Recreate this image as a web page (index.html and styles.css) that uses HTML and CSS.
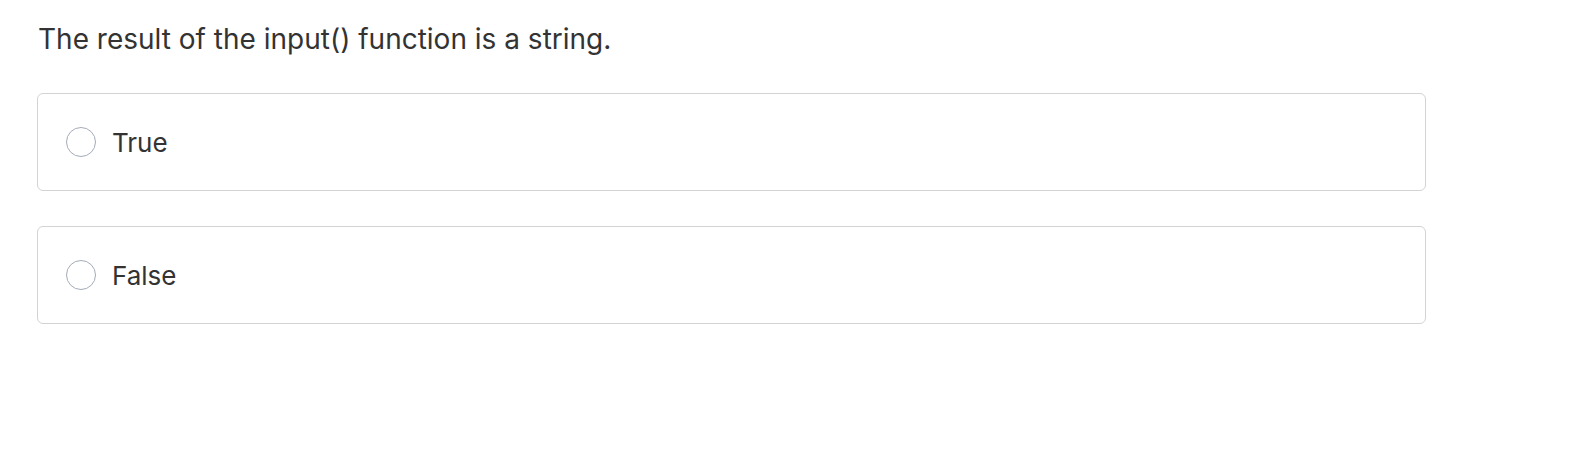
FILE: index.html
```html
<!DOCTYPE html>
<html>
<head>
<meta charset="utf-8">
<link rel="stylesheet" href="styles.css">
</head>
<body>
<div class="question">
  <p class="prompt">The result of the input() function is a string.</p>
  <div class="options">
    <label class="option">
      <span class="radio"></span>
      <span class="label">True</span>
    </label>
    <label class="option">
      <span class="radio"></span>
      <span class="label">False</span>
    </label>
  </div>
</div>
</body>
</html>
```

FILE: styles.css
```css
html, body {
  margin: 0;
  padding: 0;
  background: #ffffff;
}

body {
  font-family: Inter, "Liberation Sans", sans-serif;
  color: #333333;
}

.question {
  padding: 21px 0 0 37px;
  width: 1389px;
}

.prompt {
  margin: 0;
  font-size: 28px;
  line-height: 36px;
  padding-left: 1px;
}

.options {
  display: flex;
  flex-direction: column;
  gap: 35px;
  margin-top: 36px;
}

.option {
  display: flex;
  align-items: center;
  height: 96px;
  border: 1px solid #d3d3d3;
  border-radius: 6px;
  padding-left: 28px;
  gap: 16px;
}

.radio {
  width: 28px;
  height: 28px;
  border: 1px solid #a4abb8;
  border-radius: 50%;
  flex: none;
}

.label {
  font-size: 26px;
  line-height: 32px;
  padding-top: 2px;
}
```
